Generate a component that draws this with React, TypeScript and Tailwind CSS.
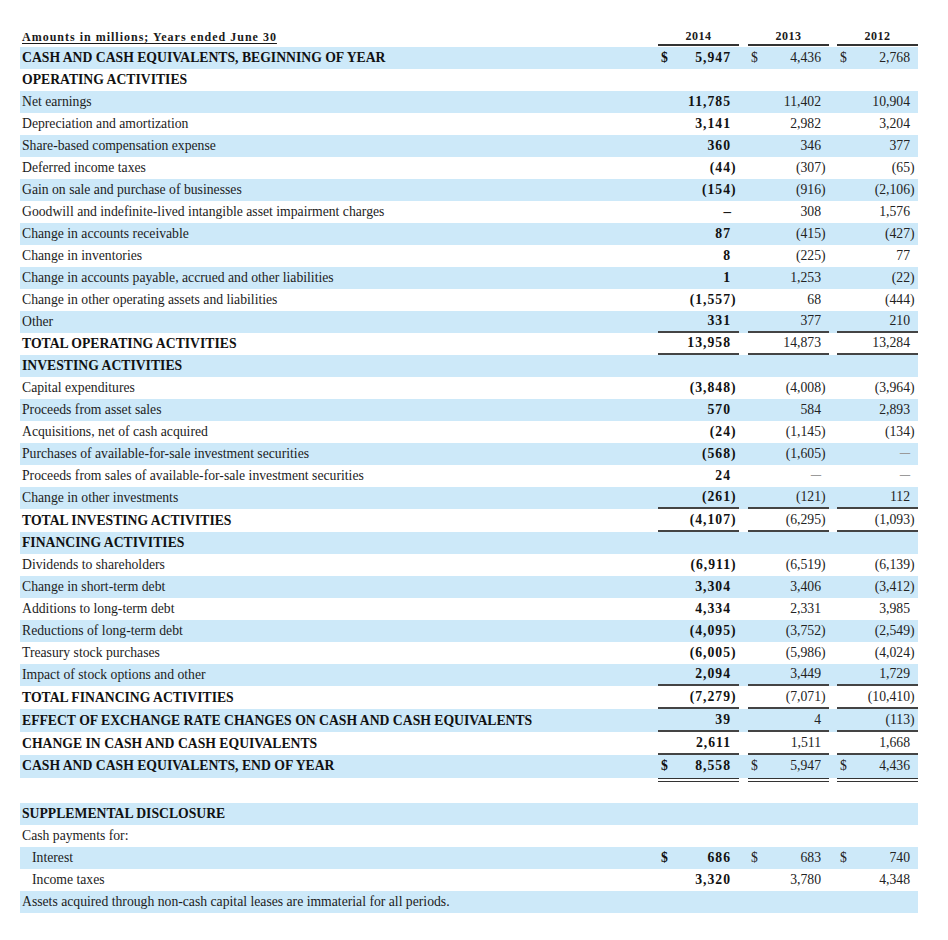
type Line = "single" | "double";

type Row = {
  label: string;
  bold?: boolean;
  dollar?: boolean;
  indent?: boolean;
  vals?: string[];
  line?: Line;
  tall?: boolean;
};

const rows: Row[] = [
  { label: "CASH AND CASH EQUIVALENTS, BEGINNING OF YEAR", bold: true, dollar: true, vals: ["5,947", "4,436", "2,768"] },
  { label: "OPERATING ACTIVITIES", bold: true },
  { label: "Net earnings", vals: ["11,785", "11,402", "10,904"] },
  { label: "Depreciation and amortization", vals: ["3,141", "2,982", "3,204"] },
  { label: "Share-based compensation expense", vals: ["360", "346", "377"] },
  { label: "Deferred income taxes", vals: ["(44)", "(307)", "(65)"] },
  { label: "Gain on sale and purchase of businesses", vals: ["(154)", "(916)", "(2,106)"] },
  { label: "Goodwill and indefinite-lived intangible asset impairment charges", vals: ["—", "308", "1,576"] },
  { label: "Change in accounts receivable", vals: ["87", "(415)", "(427)"] },
  { label: "Change in inventories", vals: ["8", "(225)", "77"] },
  { label: "Change in accounts payable, accrued and other liabilities", vals: ["1", "1,253", "(22)"] },
  { label: "Change in other operating assets and liabilities", vals: ["(1,557)", "68", "(444)"] },
  { label: "Other", vals: ["331", "377", "210"], line: "single" },
  { label: "TOTAL OPERATING ACTIVITIES", bold: true, vals: ["13,958", "14,873", "13,284"], line: "single" },
  { label: "INVESTING ACTIVITIES", bold: true },
  { label: "Capital expenditures", vals: ["(3,848)", "(4,008)", "(3,964)"] },
  { label: "Proceeds from asset sales", vals: ["570", "584", "2,893"] },
  { label: "Acquisitions, net of cash acquired", vals: ["(24)", "(1,145)", "(134)"] },
  { label: "Purchases of available-for-sale investment securities", vals: ["(568)", "(1,605)", "—"] },
  { label: "Proceeds from sales of available-for-sale investment securities", vals: ["24", "—", "—"] },
  { label: "Change in other investments", vals: ["(261)", "(121)", "112"], line: "single" },
  { label: "TOTAL INVESTING ACTIVITIES", bold: true, vals: ["(4,107)", "(6,295)", "(1,093)"], line: "single", tall: true },
  { label: "FINANCING ACTIVITIES", bold: true },
  { label: "Dividends to shareholders", vals: ["(6,911)", "(6,519)", "(6,139)"] },
  { label: "Change in short-term debt", vals: ["3,304", "3,406", "(3,412)"] },
  { label: "Additions to long-term debt", vals: ["4,334", "2,331", "3,985"] },
  { label: "Reductions of long-term debt", vals: ["(4,095)", "(3,752)", "(2,549)"] },
  { label: "Treasury stock purchases", vals: ["(6,005)", "(5,986)", "(4,024)"] },
  { label: "Impact of stock options and other", vals: ["2,094", "3,449", "1,729"], line: "single" },
  { label: "TOTAL FINANCING ACTIVITIES", bold: true, vals: ["(7,279)", "(7,071)", "(10,410)"], line: "single", tall: true },
  { label: "EFFECT OF EXCHANGE RATE CHANGES ON CASH AND CASH EQUIVALENTS", bold: true, vals: ["39", "4", "(113)"], line: "single", tall: true },
  { label: "CHANGE IN CASH AND CASH EQUIVALENTS", bold: true, vals: ["2,611", "1,511", "1,668"], line: "single", tall: true },
  { label: "CASH AND CASH EQUIVALENTS, END OF YEAR", bold: true, dollar: true, vals: ["8,558", "5,947", "4,436"], line: "double" },
];

const supplemental: Row[] = [
  { label: "SUPPLEMENTAL DISCLOSURE", bold: true },
  { label: "Cash payments for:" },
  { label: "Interest", indent: true, dollar: true, vals: ["686", "683", "740"] },
  { label: "Income taxes", indent: true, vals: ["3,320", "3,780", "4,348"] },
  { label: "Assets acquired through non-cash capital leases are immaterial for all periods." },
];

const cellPos = ["ml-[9px]", "ml-[9px]", "ml-[8px]"];

function Value({ v, strong }: { v: string; strong: boolean }) {
  if (v === "—") {
    return (
      <>
        <span className="flex flex-1 items-center justify-end">
          <span
            className={
              strong
                ? "relative top-[-1px] text-[15px] leading-none font-bold text-[#111]"
                : "relative top-[-2px] text-[20px] leading-none text-[#9a9a9a]"
            }
          >
            –
          </span>
        </span>
        <span className="w-[8px]" />
      </>
    );
  }
  const neg = v.endsWith(")");
  return (
    <>
      <span className={strong ? "flex-1 text-right font-bold tracking-[1px]" : "flex-1 text-right"}>
        {neg ? v.slice(0, -1) : v}
      </span>
      <span className={strong ? "w-[8px] font-bold" : "w-[8px]"}>{neg ? ")" : ""}</span>
    </>
  );
}

function TableRow({ r, blue }: { r: Row; blue: boolean }) {
  const double = r.line === "double";
  const h = double ? "h-[23px] mb-[3px] items-start" : r.tall ? "h-[23px] items-stretch" : "h-[22px] items-stretch";
  return (
    <div className={`flex ${h} ${blue ? "bg-[#cde9f9]" : ""}`}>
      <div
        className={`flex w-[629px] items-center ${r.indent ? "pl-[12px]" : "pl-[2px]"} ${
          r.bold ? "font-bold text-[#111]" : "text-[#1c1c1c]"
        }`}
      >
        {r.label}
      </div>
      {[0, 1, 2].map((c) => (
        <div
          key={c}
          className={`flex w-[81px] items-center ${cellPos[c]} ${
            r.line === "single" ? "border-b-2 border-[#444]" : ""
          } ${double ? "h-[27px] border-b-4 border-double border-[#333] pb-[1px]" : ""} ${
            c === 0 ? "text-[#111]" : "text-[#222]"
          }`}
        >
          {r.vals && (
            <>
              {r.dollar && <span className={`pl-[3px] ${c === 0 ? "font-bold" : ""}`}>$</span>}
              <Value v={r.vals[c]} strong={c === 0} />
            </>
          )}
        </div>
      ))}
    </div>
  );
}

export default function App() {
  return (
    <div className="min-h-[940px] w-[948px] bg-white pt-[25px] font-['Liberation_Serif',serif] text-[13.7px] leading-[22px]">
      <div className="ml-[20px] w-[898px]">
        {/* Header */}
        <div className="mb-[1px] flex h-[21px]">
          <div className="flex w-[629px] items-center pl-[2px] pt-[3px] text-[12px] font-bold tracking-[1px] text-[#1a1a1a] underline underline-offset-2">
            Amounts in millions; Years ended June 30
          </div>
          {["2014", "2013", "2012"].map((y, c) => (
            <div
              key={y}
              className={`flex w-[81px] items-center justify-center border-b-2 border-[#333] pt-[3px] text-[12px] font-bold tracking-[0.5px] text-[#1a1a1a] ${cellPos[c]}`}
            >
              {y}
            </div>
          ))}
        </div>

        {rows.map((r, i) => (
          <TableRow key={r.label} r={r} blue={i % 2 === 0} />
        ))}

        <div className="h-[22px]" />

        {supplemental.map((r, i) => (
          <TableRow key={r.label} r={r} blue={i % 2 === 0} />
        ))}
      </div>
    </div>
  );
}
